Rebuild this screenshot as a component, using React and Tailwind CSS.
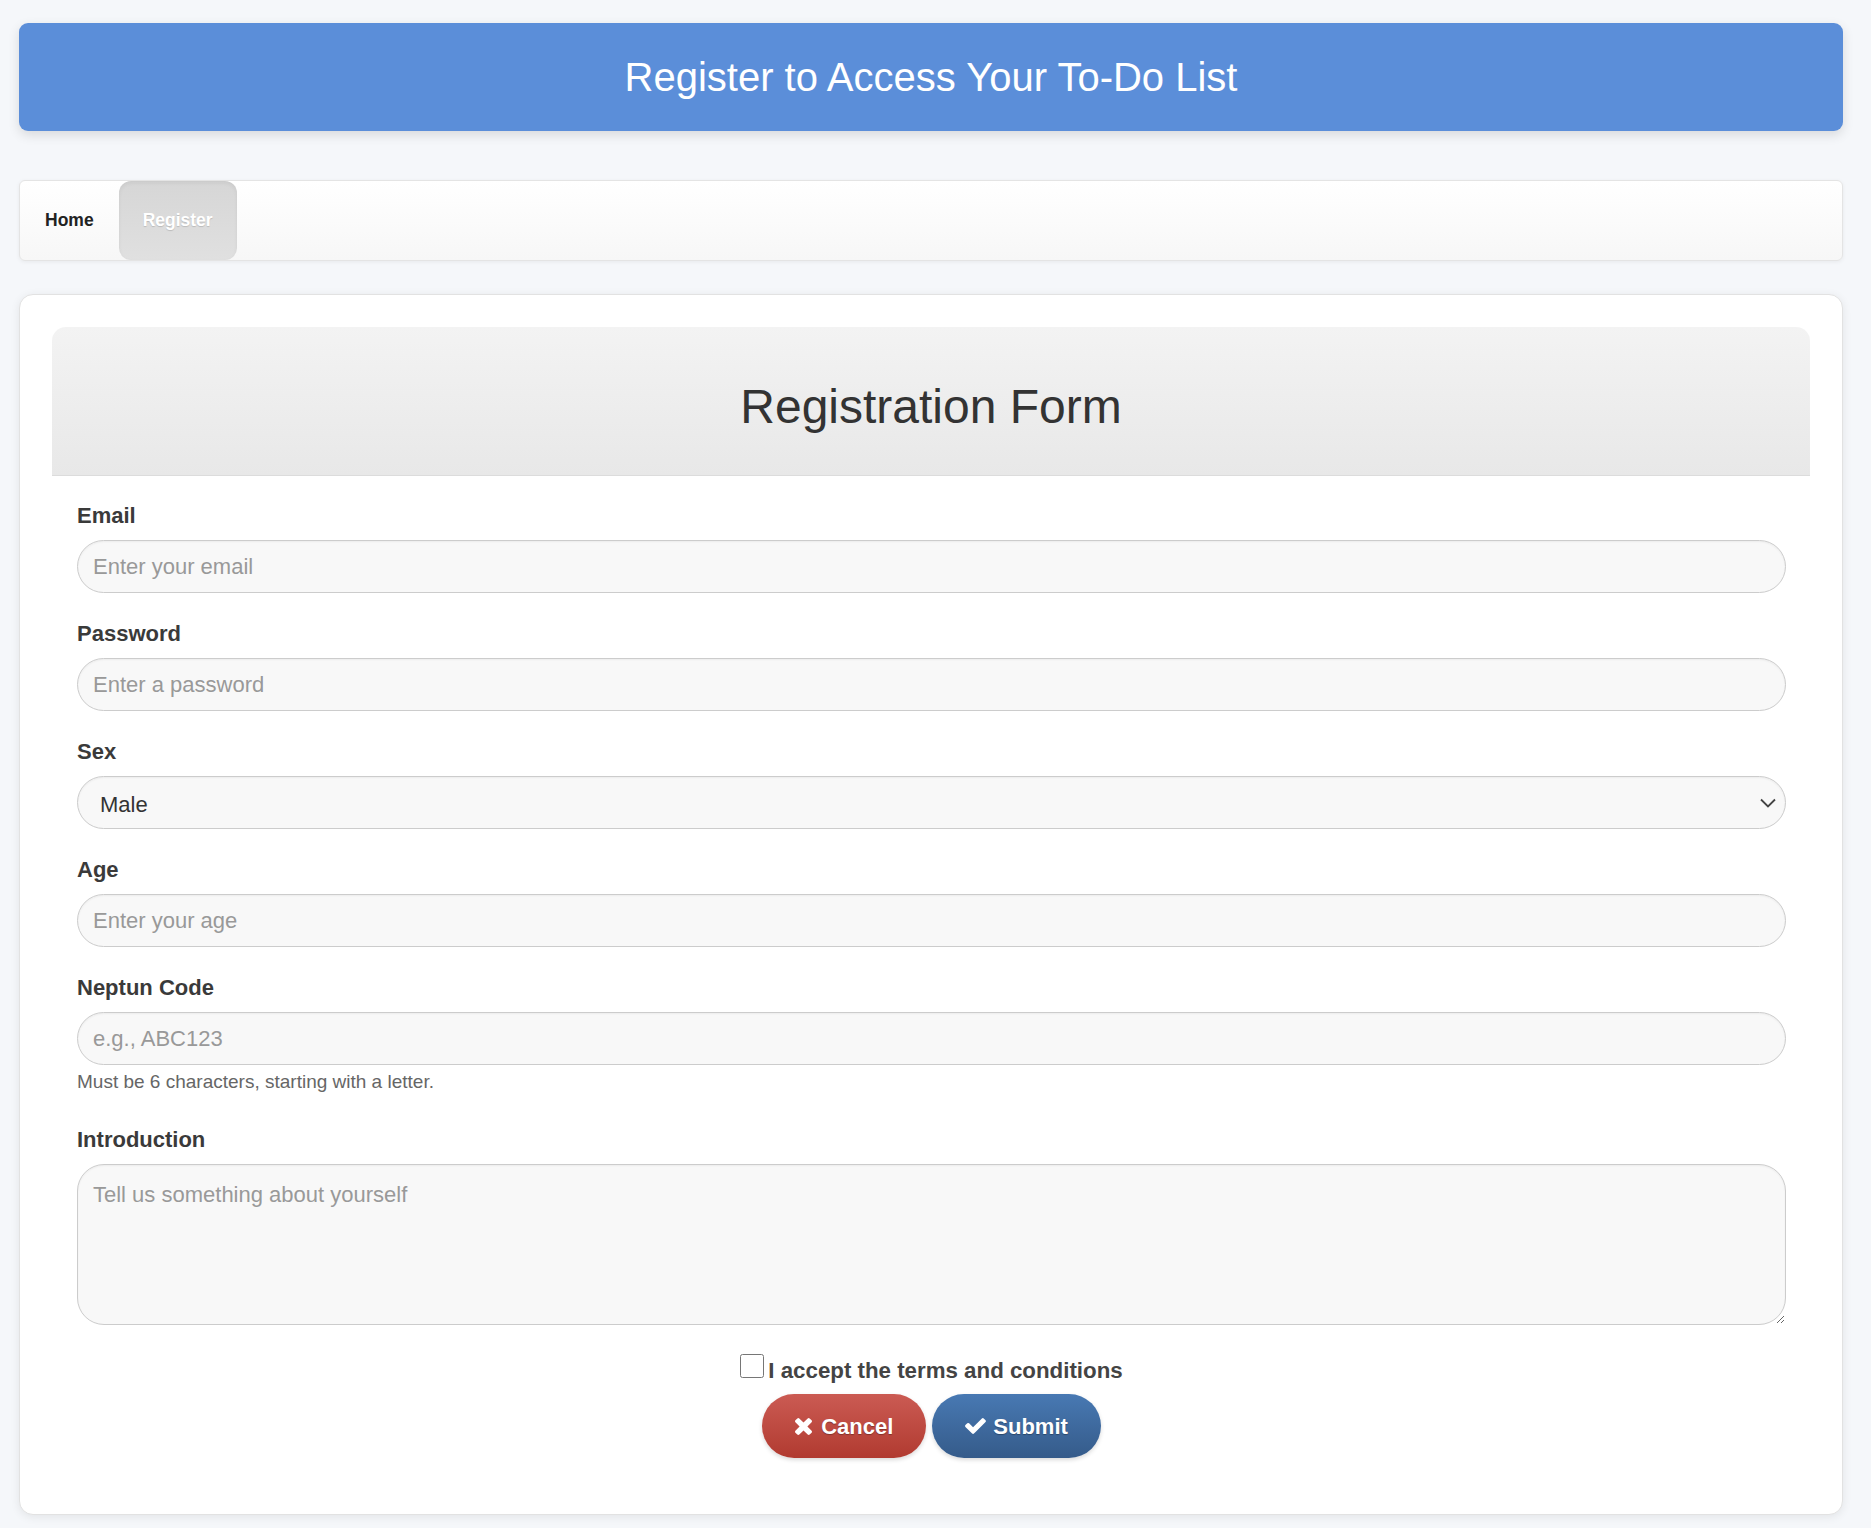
import { useState } from 'react'

function TimesIcon() {
  return (
    <svg viewBox="110 366 1188 1188" className="w-[17px] h-[17px] fill-white">
      <path d="M1298 1322q0 40-28 68l-136 136q-28 28-68 28t-68-28l-294-294-294 294q-28 28-68 28t-68-28l-136-136q-28-28-28-68t28-68l294-294-294-294q-28-28-28-68t28-68l136-136q28-28 68-28t68 28l294 294 294-294q28-28 68-28t68 28l136 136q28 28 28 68t-28 68l-294 294 294 294q28 28 28 68z" />
    </svg>
  )
}

function CheckIcon() {
  return (
    <svg viewBox="121 334 1550 1188" className="w-[21px] h-[16px] fill-white">
      <path d="M1671 566q0 40-28 68l-724 724-136 136q-28 28-68 28t-68-28l-136-136-362-362q-28-28-28-68t28-68l136-136q28-28 68-28t68 28l294 295 656-657q28-28 68-28t68 28l136 136q28 28 28 68z" />
    </svg>
  )
}

const inputClass =
  'block w-full h-[53px] rounded-[27px] border border-[#cccccc] bg-[#f8f8f8] px-[15px] text-[22px] text-[#333] placeholder:text-[#999] shadow-[inset_0_1px_2px_rgba(0,0,0,0.05)] outline-none'

function Field({ label, children, className = 'mb-[28px]' }) {
  return (
    <div className={className}>
      <label className="block mb-[12px] text-[22px] font-bold leading-[25px] text-[#3a3a3a]">{label}</label>
      {children}
    </div>
  )
}

export default function App() {
  const [sex, setSex] = useState('male')
  const [accepted, setAccepted] = useState(false)

  return (
    <div className="min-h-screen bg-[#f5f7fa] pt-[23px] pl-[19px] pr-[28px] pb-[15px] font-['Liberation_Sans',Arial,sans-serif]">
      {/* Page header */}
      <header className="h-[108px] rounded-[9px] bg-[#5b8ed9] flex items-center justify-center shadow-[0_4px_12px_rgba(0,0,0,0.12)]">
        <h1 className="text-[40px] font-normal text-white leading-[46px]">Register to Access Your To-Do List</h1>
      </header>

      {/* Navigation */}
      <nav className="mt-[49px] h-[81px] flex rounded-[6px] border border-[#e4e4e4] bg-gradient-to-b from-white to-[#f7f7f7] shadow-[0_1px_4px_rgba(0,0,0,0.06)]">
        <a href="#" className="flex items-center px-[25px] text-[17.5px] font-bold text-[#222]">
          Home
        </a>
        <a
          href="#"
          className="flex items-center px-[24px] rounded-[12px] bg-gradient-to-b from-[#d6d6d6] to-[#e0e0e0] shadow-[inset_0_2px_4px_rgba(0,0,0,0.06)] text-[17.5px] font-bold text-white [text-shadow:0_1px_1px_rgba(0,0,0,0.15)]"
        >
          Register
        </a>
      </nav>

      {/* Form card */}
      <div className="mt-[33px] rounded-[14px] border border-[#e2e2e2] bg-white p-[32px] shadow-[0_2px_10px_rgba(0,0,0,0.08)]">
        <div className="rounded-t-[14px] border-b border-[#dcdcdc] bg-gradient-to-b from-[#f3f3f3] to-[#e8e8e8] pt-[53px] pb-[41px] text-center">
          <h2 className="text-[48px] font-normal leading-[54px] text-[#333]">Registration Form</h2>
        </div>

        <form className="pl-[25px] pr-[24px] pt-[27px] pb-[24px]" onSubmit={e => e.preventDefault()}>
          <Field label="Email">
            <input type="email" placeholder="Enter your email" className={inputClass} />
          </Field>

          <Field label="Password">
            <input type="password" placeholder="Enter a password" className={inputClass} />
          </Field>

          <Field label="Sex">
            <div className="relative">
              <select
                value={sex}
                onChange={e => setSex(e.target.value)}
                className={inputClass + ' appearance-none pl-[22px] pt-[3px]'}
              >
                <option value="male">Male</option>
                <option value="female">Female</option>
              </select>
              <svg viewBox="0 0 16 10" className="absolute right-[10px] top-[22px] w-[16px] h-[10px] pointer-events-none">
                <polyline points="1,1.5 8,8.5 15,1.5" fill="none" stroke="#444" strokeWidth="1.8" />
              </svg>
            </div>
          </Field>

          <Field label="Age">
            <input type="number" placeholder="Enter your age" className={inputClass + ' appearance-none [-moz-appearance:textfield] [&::-webkit-inner-spin-button]:appearance-none'} />
          </Field>

          <Field label="Neptun Code" className="mb-[34px]">
            <input type="text" placeholder="e.g., ABC123" className={inputClass} />
            <p className="mt-[6px] text-[19px] leading-[22px] text-[#666]">Must be 6 characters, starting with a letter.</p>
          </Field>

          <Field label="Introduction" className="">
            <textarea
              placeholder="Tell us something about yourself"
              className="block w-full h-[161px] rounded-[27px] border border-[#cccccc] bg-[#f8f8f8] pt-[13px] px-[15px] text-[22px] text-[#333] placeholder:text-[#999] shadow-[inset_0_1px_2px_rgba(0,0,0,0.05)] outline-none"
            />
          </Field>

          <label className="mt-[29px] flex items-start justify-center gap-[4px]">
            <input
              type="checkbox"
              checked={accepted}
              onChange={e => setAccepted(e.target.checked)}
              className="w-[24px] h-[24px]"
            />
            <span className="mt-[4px] text-[22.3px] font-bold leading-[25px] text-[#444]">I accept the terms and conditions</span>
          </label>

          <div className="mt-[11px] flex justify-center gap-[6px]">
            <button
              type="button"
              className="h-[64px] px-[33px] flex items-center gap-[9px] rounded-full bg-gradient-to-b from-[#cb5b53] to-[#b13a30] text-[22px] font-bold text-white [text-shadow:0_1px_1px_rgba(0,0,0,0.3)] shadow-[0_2px_4px_rgba(0,0,0,0.15)]"
            >
              <TimesIcon />
              Cancel
            </button>
            <button
              type="submit"
              className="h-[64px] px-[33px] flex items-center gap-[7px] rounded-full bg-gradient-to-b from-[#4879b3] to-[#355b8a] text-[22px] font-bold text-white [text-shadow:0_1px_1px_rgba(0,0,0,0.3)] shadow-[0_2px_4px_rgba(0,0,0,0.15)]"
            >
              <CheckIcon />
              Submit
            </button>
          </div>
        </form>
      </div>
    </div>
  )
}
